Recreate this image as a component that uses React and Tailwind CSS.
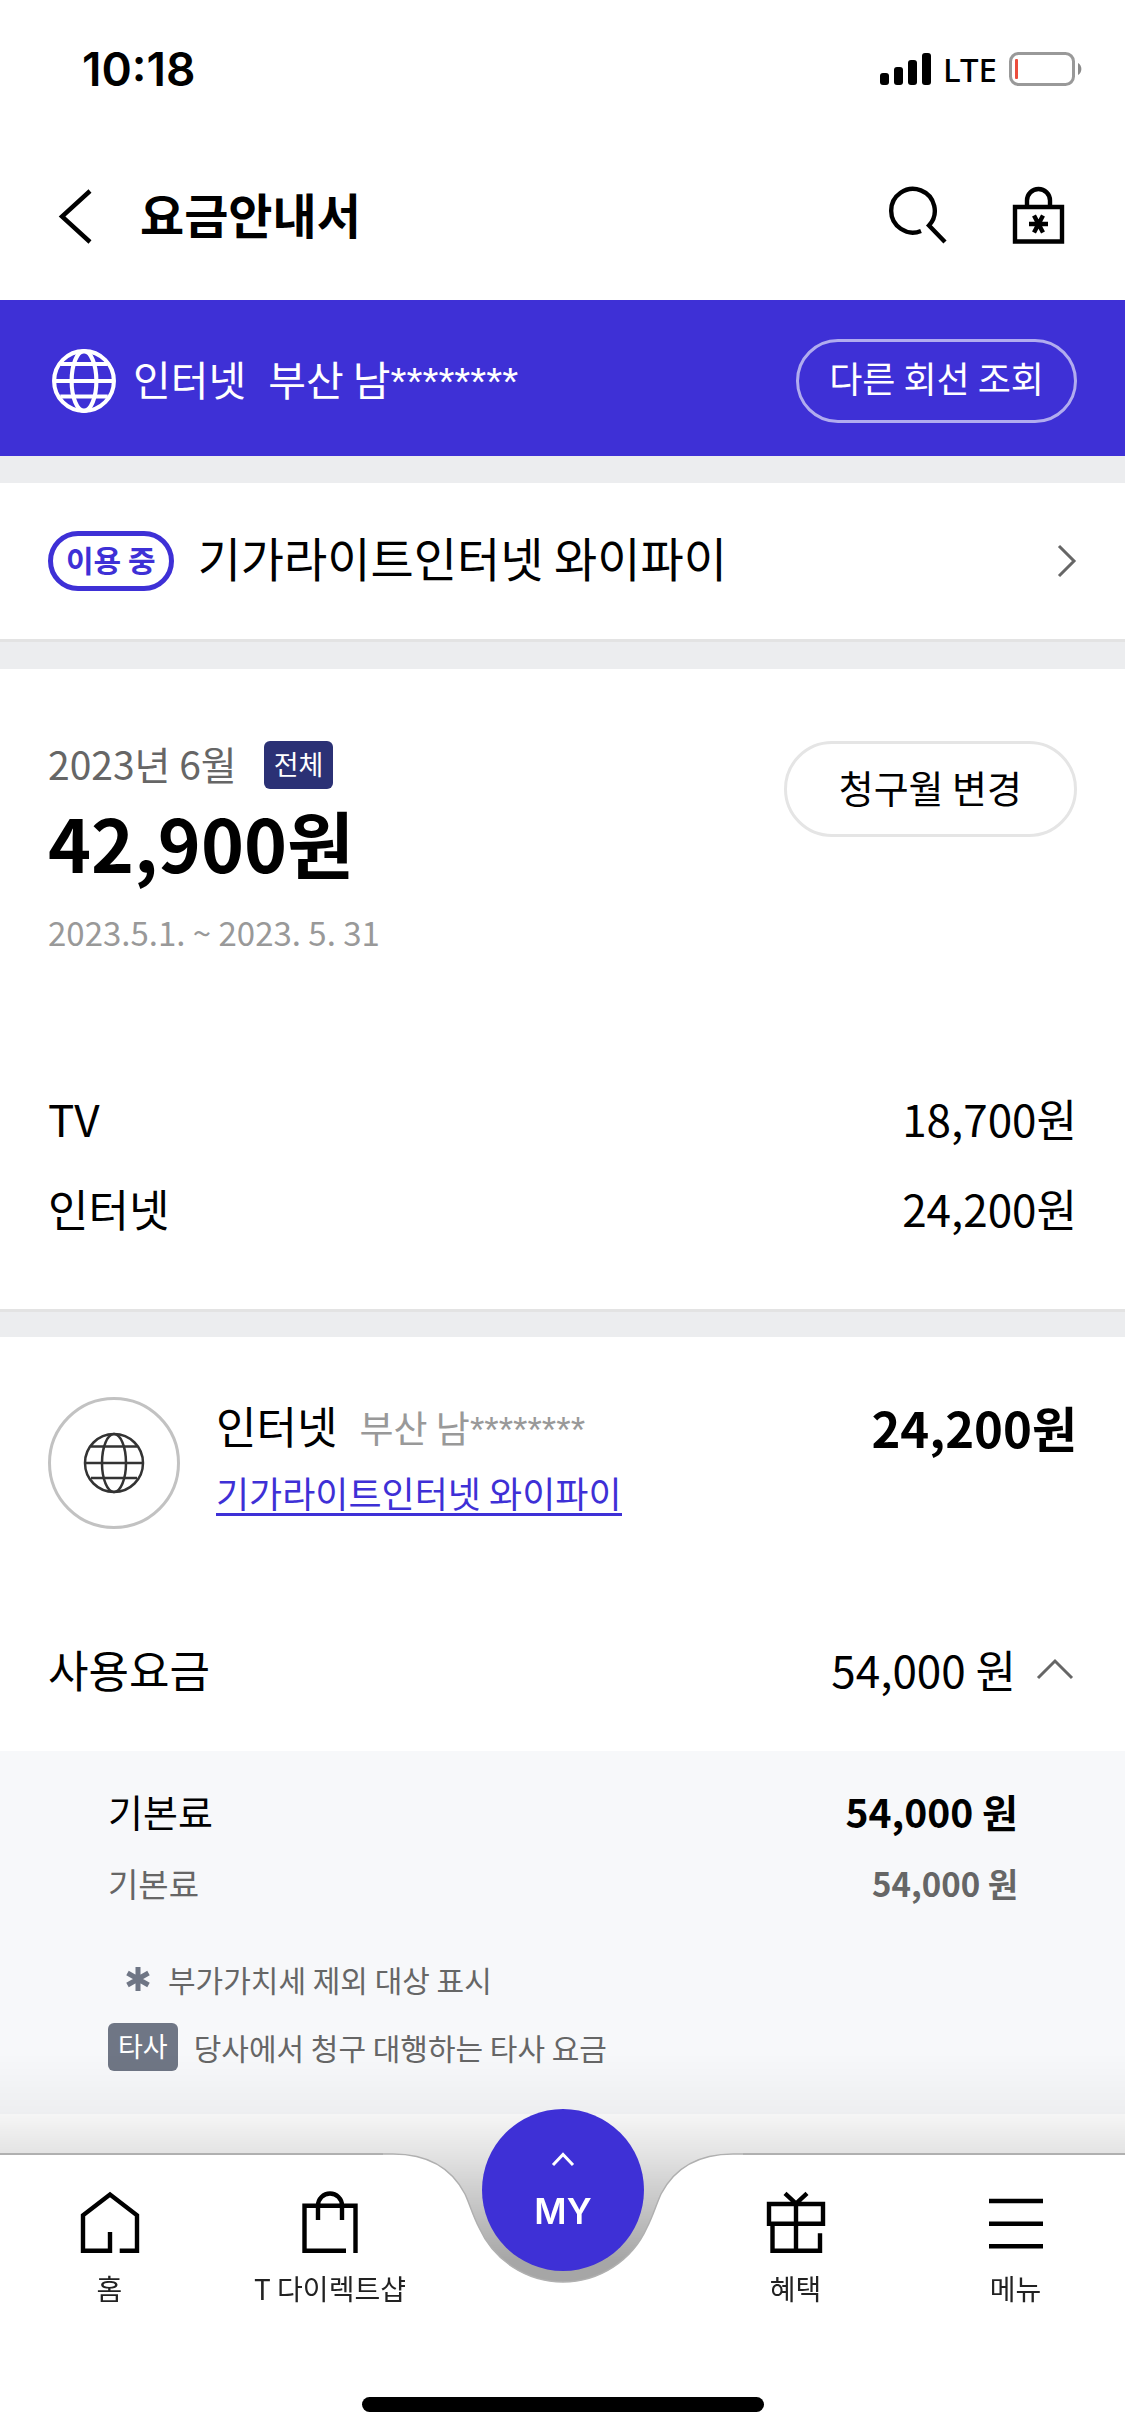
import React, { useState } from 'react';

const summary = [
  { name: 'TV', price: '18,700원' },
  { name: '인터넷', price: '24,200원' },
];

function Globe({ className, strokeWidth }) {
  return (
    <svg viewBox="0 0 64 64" fill="none" stroke="currentColor" strokeWidth={strokeWidth} className={className} aria-hidden="true">
      <circle cx="32" cy="32" r="29" />
      <ellipse cx="32" cy="32" rx="12" ry="29" />
      <path d="M3 32H61M9 15.500H55M9 47H55" />
    </svg>
  );
}

function Icon({ children }) {
  return (
    <svg viewBox="0 0 64 64" fill="none" stroke="currentColor" strokeWidth="4.4" className="size-16 shrink-0" aria-hidden="true">
      {children}
    </svg>
  );
}

// 마스킹된 주소
function MaskedAddress({ className }) {
  return (
    <span className={className}>
      부산 남<span className="font-['Liberation_Sans',sans-serif]">********</span>
    </span>
  );
}

function StatusBar() {
  return (
    <div className="flex h-[138px] items-center justify-between pr-[42px] pl-[82px]">
      <span className="font-['Inter',sans-serif] text-[46px] leading-none font-semibold">10:18</span>
      <div className="flex items-center gap-3">
        <svg viewBox="0 0 51 32" className="h-8 w-[51px]" aria-hidden="true">
          <rect x="0" y="20" width="9" height="12" rx="3" />
          <rect x="14" y="14" width="9" height="18" rx="3" />
          <rect x="28" y="7" width="9" height="25" rx="3" />
          <rect x="42" y="0" width="9" height="32" rx="3" />
        </svg>
        <span className="font-['Noto_Sans',sans-serif] text-[33px] leading-none font-medium">LTE</span>
        <svg viewBox="0 0 74 34" className="h-[34px] w-[74px]" aria-hidden="true">
          <rect x="1.500" y="1.500" width="63" height="31" rx="8" fill="none" stroke="#999" strokeWidth="3" />
          <rect x="6" y="7" width="3" height="20" rx="1" fill="#eb4d3d" />
          <path d="M69 11a7 7 0 0 1 0 12z" fill="#8a8a8a" />
        </svg>
      </div>
    </div>
  );
}

function Header() {
  return (
    <header className="flex h-[162px] items-center pr-[55px] pb-1 pl-11">
      <button type="button" aria-label="뒤로">
        <Icon>
          <path d="M46 6L18 31.500L46 57" />
        </Icon>
      </button>
      <h1 className="ml-8 flex-1 pb-2 text-[48px] leading-[60px] font-bold">요금안내서</h1>
      <div className="flex gap-14">
        <button type="button" aria-label="검색">
          <Icon>
            <path d="M35 46A21.800 21.800 0 1 1 43 40.500L59 57" />
          </Icon>
        </button>
        <button type="button" aria-label="잠금">
          <Icon>
            <path d="M9 22H56V56.500H9zM21 22V15.500a11.500 11.500 0 0 1 23 0V22" />
            <path d="M23 39H42M28 30.500L37 47.500M37 30.500L28 47.500" />
          </Icon>
        </button>
      </div>
    </header>
  );
}

const leftMenus = [
  { label: '홈', icon: <path d="M32 42V60.700H5V25.300L32 4.500L59 25.300V60.700H41.700" /> },
  { label: 'T 다이렉트샵', icon: <path d="M48 60.700H6.500V15.700H57.500V63M20 30V15.500a12 12 0 0 1 24 0V30" /> },
];

const rightMenus = [
  { label: '혜택', icon: <path d="M5 14H59V33.700H5zM8.500 34V60.700H56V43.300M32 14V60.700M21 3.300L32 13.500L43 3.300" /> },
  { label: '메뉴', icon: <path d="M5 11H59M5 33.700H59M5 56.300H59" /> },
];

function NavItem({ label, icon }) {
  return (
    <a href="#" className="flex flex-col items-center gap-4 pt-[37px]">
      <Icon>{icon}</Icon>
      <span className="text-[28px] leading-9 whitespace-nowrap text-[#222]">{label}</span>
    </a>
  );
}

function BottomNav() {
  return (
    <nav className="fixed inset-x-0 bottom-0 h-[283px]">
      {/* 그림자 */}
      <div className="absolute inset-x-0 -top-[100px] h-[230px] bg-[linear-gradient(to_bottom,transparent,rgb(0_0_0/0.04)_27%,rgb(0_0_0/0.11)_44%,rgb(0_0_0/0.35)_90%)]" />

      {/* 가운데가 파인 흰색 배경 */}
      <div className="absolute inset-0 flex flex-col">
        <div className="flex h-[131px]">
          <div className="flex-1 border-t-2 border-[#b0b0b0] bg-white" />
          <svg viewBox="0 0 360 131" className="h-[131px] w-[360px]" aria-hidden="true">
            <path
              d="M0 1H10C48 1 70 18 82 41C87 52 90 63 96 74.500A92 92 0 0 0 264 74.500C270 63 273 52 278 41C290 18 312 1 350 1H360V131H0z"
              fill="#fff"
            />
            <path
              d="M0 1H10C48 1 70 18 82 41C87 52 90 63 96 74.500A92 92 0 0 0 264 74.500C270 63 273 52 278 41C290 18 312 1 350 1H360"
              fill="none"
              stroke="#b0b0b0"
              strokeWidth="1.500"
            />
          </svg>
          <div className="flex-1 border-t-2 border-[#b0b0b0] bg-white" />
        </div>
        <div className="flex-1 bg-white" />
      </div>

      <div className="relative grid grid-cols-[219fr_222fr_244fr_221fr_219fr]">
        {leftMenus.map((menu) => (
          <NavItem key={menu.label} {...menu} />
        ))}
        <button
          type="button"
          className="-mt-11 flex size-[162px] flex-col items-center justify-self-center rounded-full bg-[#3e30d6] pt-[42px] text-white"
        >
          <svg viewBox="0 0 24 16" fill="none" stroke="currentColor" strokeWidth="3" className="h-4 w-6" aria-hidden="true">
            <path d="M2 14L12 3.500L22 14" />
          </svg>
          <span className="mt-5 font-['Inter',sans-serif] text-[35px] leading-[48px] font-semibold">MY</span>
        </button>
        {rightMenus.map((menu) => (
          <NavItem key={menu.label} {...menu} />
        ))}
      </div>

      <div className="absolute inset-x-0 bottom-6 mx-auto h-[15px] w-[402px] rounded-full bg-black" />
    </nav>
  );
}

function App() {
  const [open, setOpen] = useState(true);

  return (
    <div className="min-h-screen bg-white pb-80 font-['Noto_Sans_CJK_KR',sans-serif] text-black">
      <StatusBar />
      <Header />

      {/* --- 선택된 회선 --- */}
      <section className="flex items-center justify-between bg-[#3e30d6] pt-[39px] pr-12 pb-[33px] pl-[51px] text-white">
        <div className="flex items-center">
          <Globe className="size-[66px]" strokeWidth="4" />
          <div className="ml-4 flex gap-[22px] pb-0.5 text-[41px] leading-[60px]">
            <span>인터넷</span>
            <MaskedAddress />
          </div>
        </div>
        <button type="button" className="h-[84px] rounded-full border-3 border-white/60 px-[30px] pb-2 text-[36px] leading-[54px]">
          다른 회선 조회
        </button>
      </section>

      <main>
        {/* --- 이용 중인 상품 --- */}
        <section className="border-t-27 border-b-3 border-t-[#ecedef] border-b-[#e3e3e3]">
          <a href="#" className="flex items-center px-12 py-12">
            <span className="flex h-[60px] items-center rounded-full border-5 border-[#3e30d6] px-[13px] pb-1 text-[30px] leading-10 font-bold text-[#3e30d6]">
              이용 중
            </span>
            <span className="ml-6 flex-1 pb-2 text-[47px] leading-[52px]">기가라이트인터넷 와이파이</span>
            <svg viewBox="0 0 20 36" fill="none" stroke="#666" strokeWidth="3" className="h-9 w-5" aria-hidden="true">
              <path d="M2 3L17 18L2 33" />
            </svg>
          </a>
        </section>

        {/* --- 청구 요약 --- */}
        <section className="border-t-27 border-b-3 border-t-[#ecedef] border-b-[#e3e3e3] px-12 pt-[72px] pb-14">
          <div className="flex items-start justify-between">
            <div>
              <div className="flex items-center gap-[27px]">
                <span className="pb-1 text-[39px] leading-[44px] text-[#666]">2023년 6월</span>
                <span className="h-12 rounded-md bg-[#2b3175] px-[10px] text-[27px] leading-[46px] text-white">전체</span>
              </div>
              <p className="mt-4 text-[73px] leading-[73px] font-bold">42,900원</p>
              <p className="mt-[33px] text-[33px] leading-[42px] text-[#999]">2023.5.1. ~ 2023. 5. 31</p>
            </div>
            <button type="button" className="h-24 rounded-full border-3 border-[#e5e5e5] px-[52px] pb-1 text-[38px] leading-[54px]">
              청구월 변경
            </button>
          </div>
          <ul className="mt-[120px]">
            {summary.map((item) => (
              <li key={item.name} className="flex justify-between text-[44px] leading-[90px]">
                <span>{item.name}</span>
                <span>{item.price}</span>
              </li>
            ))}
          </ul>
        </section>

        {/* --- 상세 내역 --- */}
        <section className="border-t-25 border-[#ecedef]">
          <div className="flex items-start px-12 pt-[60px]">
            <span className="flex size-[132px] items-center justify-center rounded-full border-3 border-[#c2c2c2] text-[#333]">
              <Globe className="size-16" strokeWidth="2.500" />
            </span>
            <div className="ml-9 flex-1">
              <div className="flex items-center gap-[22px]">
                <h2 className="pb-2 text-[44px] leading-[52px]">인터넷</h2>
                <MaskedAddress className="text-[37px] leading-[60px] text-[#999]" />
              </div>
              <a href="#" className="mt-[10px] inline-block border-b-3 border-[#3e30d6] text-[36px] leading-[42px] text-[#3e30d6]">
                기가라이트인터넷 와이파이
              </a>
            </div>
            <strong className="text-[49px] leading-[60px] font-bold">24,200원</strong>
          </div>

          <button
            type="button"
            aria-expanded={open}
            onClick={() => setOpen(!open)}
            className="mt-[60px] flex w-full items-center pr-[51px] pb-0.5 pl-12 text-[44px] leading-[160px]"
          >
            <span className="flex-1 text-left">사용요금</span>
            <span>54,000 원</span>
            <svg viewBox="0 0 38 24" fill="none" stroke="#666" strokeWidth="3" className={open ? 'ml-5 h-6 w-[38px]' : 'ml-5 h-6 w-[38px] rotate-180'} aria-hidden="true">
              <path d="M2 21L19 4L36 21" />
            </svg>
          </button>

          {open && (
            <div className="bg-[#f7f8fa] pt-6 pr-[107px] pb-[33px] pl-[108px]">
              <div className="flex justify-between leading-[72px]">
                <span className="text-[38px]">기본료</span>
                <strong className="text-[39px] font-bold">54,000 원</strong>
              </div>
              <div className="flex justify-between leading-[72px] text-[#666]">
                <span className="text-[33px]">기본료</span>
                <strong className="text-[33px] font-bold">54,000 원</strong>
              </div>
              <ul className="mt-[26px] text-[30px] leading-[68px] text-[#666]">
                <li className="flex items-center gap-[18px] pl-[18px]">
                  <svg viewBox="0 0 24 24" stroke="#6f7685" strokeWidth="5" className="size-6" aria-hidden="true">
                    <path d="M12 0V24M1.500 6L22.500 18M22.500 6L1.500 18" />
                  </svg>
                  부가가치세 제외 대상 표시
                </li>
                <li className="flex items-center gap-4">
                  <span className="h-12 rounded-md bg-[#6f7685] px-[10px] text-[27px] leading-[46px] text-white">타사</span>
                  당사에서 청구 대행하는 타사 요금
                </li>
              </ul>
            </div>
          )}
        </section>
      </main>

      <BottomNav />
    </div>
  );
}

export default App;
